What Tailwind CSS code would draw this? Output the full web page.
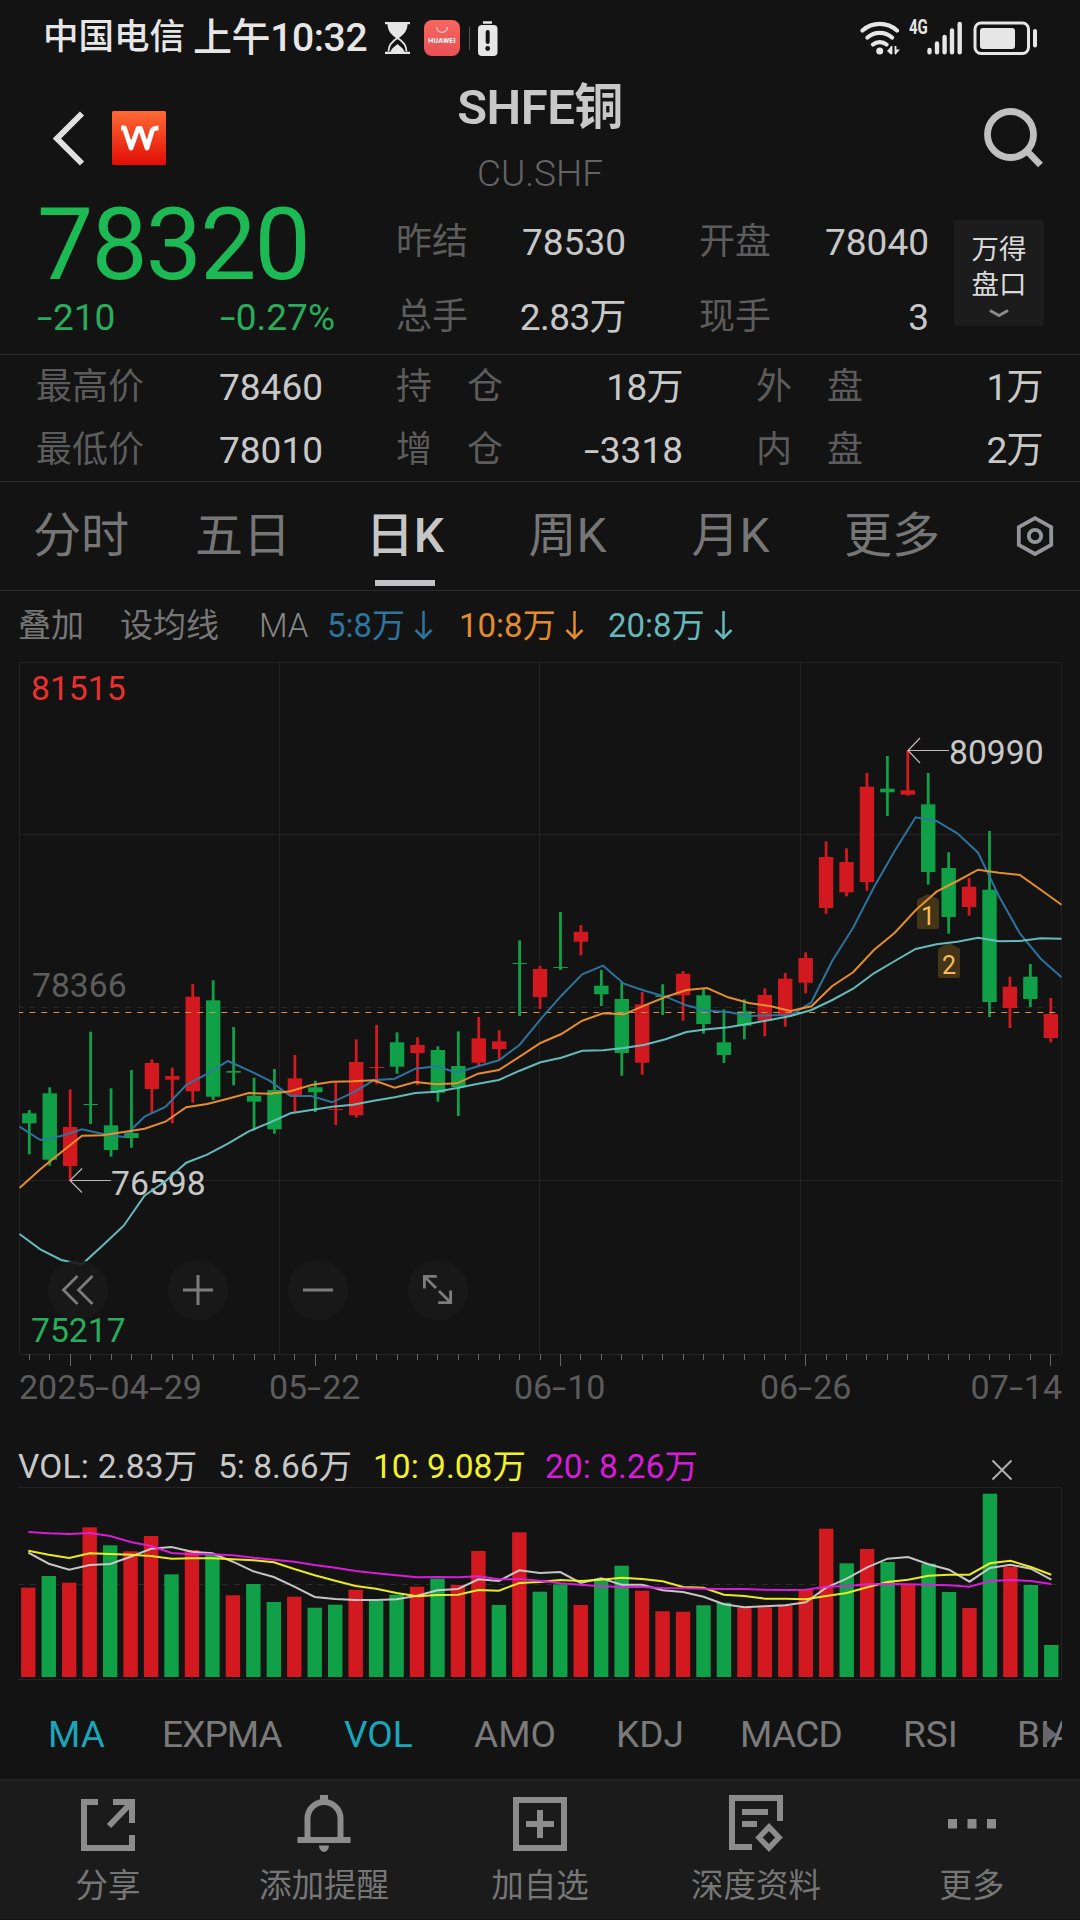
<!DOCTYPE html>
<html lang="zh-CN">
<head>
    <meta charset="UTF-8">
    <meta name="viewport" content="width=device-width, initial-scale=1.0">
    <title>SHFE铜 CU.SHF</title>
    <script src="https://cdn.jsdelivr.net/npm/@tailwindcss/browser@4"></script>
</head>
<body class="bg-[#131313] font-[Roboto,'Noto_Sans_CJK_SC',sans-serif] text-[#c8c8c8]">
    <div class="w-[1080px] h-[1920px] flex flex-col overflow-hidden">

        <!-- Status bar -->
        <div class="h-[76px] shrink-0 flex items-center justify-between pl-[43px] pr-[42px] text-[#e6e6e6]">
            <div class="flex items-center">
                <span class="w-[150px] text-[35.500px] font-medium leading-none">中国电信</span>
                <span class="w-[192px] text-[39px] font-medium leading-none whitespace-nowrap tracking-[-0.4px]">上午10:32</span>
                <svg class="w-[25px] h-[32px]" viewBox="0 0 25 32" fill="none">
                    <path d="M0 1h25M0 31h25" stroke="#e6e6e6" stroke-width="2.4"/>
                    <path d="M3.500 29.500c0-7 4-10.500 9-13.500c5 3 9 6.500 9 13.500" stroke="#e6e6e6" stroke-width="1.800"/>
                    <path d="M2.500 2h20c0 7-4 11-10 15C6.500 13 2.500 9 2.500 2zM5.500 30c1-4 4-5 7-8c3 3 6 4 7 8z" fill="#e6e6e6"/>
                </svg>
                <div class="ml-[14px] w-[36px] h-[36px] rounded-[8px] bg-linear-to-b from-[#f9665f] to-[#e85055] flex flex-col items-center">
                    <svg class="mt-[7px] w-[12px] h-[7px]" viewBox="0 0 12 7" fill="none" stroke="#ffd9d6" stroke-width="1.200"><path d="M.6 0a5.400 5.400 0 0 0 10.800 0"/></svg>
                    <span class="mt-[4px] text-[7px] leading-none font-bold tracking-[0.2px] text-white">HUAWEI</span>
                </div>
                <div class="ml-[9px] w-px h-[23px] bg-[#555]"></div>
                <svg class="ml-[8px] w-[20px] h-[35px]" viewBox="0 0 20 35">
                    <path d="M5 1.500h9" stroke="#e6e6e6" stroke-width="2.500"/>
                    <rect y="4" width="19.500" height="31" rx="4" fill="#e6e6e6"/>
                    <path d="M9.700 11v10" stroke="#131313" stroke-width="4" stroke-linecap="round"/>
                    <circle cx="9.700" cy="27.500" r="2.400" fill="#131313"/>
                </svg>
            </div>
            <div class="flex items-center">
                <svg class="w-[41px] h-[34px]" viewBox="0 0 41 34" fill="none" stroke="#e6e6e6" stroke-width="4.200" stroke-linecap="round">
                    <path d="M2.500 9.500a26 26 0 0 1 34.500 0M7.500 16.500a18.500 18.500 0 0 1 24.500 0M13 23.500a10.500 10.500 0 0 1 13.500 0"/>
                    <circle cx="19.700" cy="30" r="3.500" fill="#e6e6e6" stroke="none"/>
                    <path d="M27 30l4.500-5v9zM27 29h4M35 34v-9M35 34l5-5.500h-5z" fill="#e6e6e6" stroke="none"/>
                    <path d="M31.500 25v8M35.500 25v8" stroke-width="1.800" stroke-linecap="butt"/>
                </svg>
                <span class="ml-[8px] -mt-[22px] w-[17px] text-[20px] leading-none font-bold scale-x-75 origin-left">4G</span>
                <svg class="w-[36px] h-[34px]" viewBox="0 0 36 34" stroke="#e6e6e6" stroke-width="4.400" stroke-linecap="round">
                    <path d="M3.500 29v2.300M11 22.500v8.800M18.600 16v15.300M26 9.500v21.800M33.700 3v28.300"/>
                </svg>
                <svg class="ml-[11px] w-[65px] h-[34px]" viewBox="0 0 65 34">
                    <rect x="2" y="2" width="53.500" height="30.500" rx="6" fill="none" stroke="#e6e6e6" stroke-width="3"/>
                    <rect x="7" y="7" width="35" height="21" rx="3" fill="#e6e6e6"/>
                    <rect x="60" y="8" width="4" height="18.500" rx="2" fill="#e6e6e6"/>
                </svg>
            </div>
        </div>

        <!-- Header -->
        <div class="h-[132px] shrink-0 flex justify-between pl-[50px] pr-[36px]">
            <div class="w-[160px] flex pt-[35px]">
                <svg class="w-[36px] h-[56px]" viewBox="0 0 36 56" fill="none" stroke="#e0e0e0" stroke-width="6"><path d="M32 2.500L7 27.500L32 52.500"/></svg>
                <svg class="ml-[26px] w-[54px] h-[54px]" viewBox="0 0 54 54">
                    <defs>
                        <linearGradient id="logo" x1="0" y1="0" x2="0" y2="1">
                            <stop offset="0" stop-color="#ff6a35"/>
                            <stop offset="1" stop-color="#e20d05"/>
                        </linearGradient>
                    </defs>
                    <rect width="54" height="54" rx="1.500" fill="url(#logo)"/>
                    <path d="M9 17h3.500l6.500 20L26 17.500h2.500L35 37L40 20q1-3 6.500-3.200" fill="none" stroke="#fff" stroke-width="4.800" stroke-linejoin="round"/>
                </svg>
            </div>
            <div class="flex flex-col items-center pt-[1px]">
                <h1 class="h-[62px] text-[49px] leading-[62px] font-semibold tracking-[-0.5px]">SHFE铜</h1>
                <p class="text-[37px] leading-[69px] font-light text-[#646464]">CU.SHF</p>
            </div>
            <div class="w-[174px] flex justify-end pt-[31px]">
                <svg class="w-[62px] h-[62px]" viewBox="0 0 62 62" fill="none" stroke="#c0c0c0" stroke-width="6.800">
                    <circle cx="28.500" cy="27.500" r="23"/>
                    <path d="M45 44l13.500 14"/>
                </svg>
            </div>
        </div>

        <!-- Quote -->
        <div class="h-[146px] shrink-0 flex pl-[37px] pr-[36px] text-[37px]">
            <div class="w-[359px] text-[#1cb955]">
                <div class="text-[100px] leading-[73px] tracking-[-1.800px]">78320</div>
                <div class="w-[298px] flex justify-between leading-[74px] text-[#27ae5c]">
                    <span><i class="not-italic inline-block w-[16px] origin-left scale-x-150">-</i>210</span>
                    <span><i class="not-italic inline-block w-[16px] origin-left scale-x-150">-</i>0.27%</span>
                </div>
            </div>
            <div class="-mt-[3px] w-[230px] leading-[75px]">
                <div class="flex justify-between"><span class="text-[36px] text-[#5c5c5c]">昨结</span><span>78530</span></div>
                <div class="flex justify-between"><span class="text-[36px] text-[#5c5c5c]">总手</span><span class="tracking-[-0.6px]">2.83万</span></div>
            </div>
            <div class="-mt-[3px] ml-[73px] w-[230px] leading-[75px]">
                <div class="flex justify-between"><span class="text-[36px] text-[#5c5c5c]">开盘</span><span>78040</span></div>
                <div class="flex justify-between"><span class="text-[36px] text-[#5c5c5c]">现手</span><span>3</span></div>
            </div>
            <div class="mt-[12px] ml-[25px] w-[90px] h-[106px] rounded-[2px] bg-[#1c1c1c] flex flex-col items-center pt-[13px] text-[27.500px] leading-[34.500px] text-[#dadada]">
                <span>万得</span>
                <span>盘口</span>
                <svg class="mt-[7px] w-[20px] h-[9px]" viewBox="0 0 20 9" fill="none" stroke="#8a8a8a" stroke-width="3"><path d="M1 1.500L10 6.500L19 1.500"/></svg>
            </div>
        </div>

        <div class="h-[127px] shrink-0 border-t border-[#2c2c2c] pl-[36px] pr-[37px] pt-[1px] text-[37px] leading-[63px]">
            <div class="flex justify-between">
                <div class="w-[287px] flex justify-between"><span class="text-[36px] text-[#5c5c5c]">最高价</span><span>78460</span></div>
                <div class="w-[287px] flex justify-between"><span class="w-[107px] flex justify-between text-[36px] text-[#5c5c5c]"><i class="not-italic">持</i><i class="not-italic">仓</i></span><span class="tracking-[-0.6px]">18万</span></div>
                <div class="w-[287px] flex justify-between"><span class="w-[107px] flex justify-between text-[36px] text-[#5c5c5c]"><i class="not-italic">外</i><i class="not-italic">盘</i></span><span class="tracking-[-0.6px]">1万</span></div>
            </div>
            <div class="flex justify-between">
                <div class="w-[287px] flex justify-between"><span class="text-[36px] text-[#5c5c5c]">最低价</span><span>78010</span></div>
                <div class="w-[287px] flex justify-between"><span class="w-[107px] flex justify-between text-[36px] text-[#5c5c5c]"><i class="not-italic">增</i><i class="not-italic">仓</i></span><span><i class="not-italic inline-block w-[16px] origin-left scale-x-150">-</i>3318</span></div>
                <div class="w-[287px] flex justify-between"><span class="w-[107px] flex justify-between text-[36px] text-[#5c5c5c]"><i class="not-italic">内</i><i class="not-italic">盘</i></span><span class="tracking-[-0.6px]">2万</span></div>
            </div>
        </div>

        <!-- Period tabs -->
        <div class="h-[110px] shrink-0 border-y border-[#2c2c2c] flex items-center text-[48px] leading-[108px] text-[#767676]">
            <div class="w-[162px] text-center">分时</div>
            <div class="w-[162px] text-center">五日</div>
            <div class="relative w-[162px] text-center font-medium text-[#c6c6c6]">日K
                <div class="absolute bottom-[4px] left-[51px] w-[60px] h-[6px] bg-[#c2c1c4]"></div>
            </div>
            <div class="w-[163px] text-center">周K</div>
            <div class="w-[163px] text-center">月K</div>
            <div class="w-[160px] text-center">更多</div>
            <svg class="ml-[44px] w-[38px] h-[42px]" viewBox="0 0 38 42" fill="none" stroke="#94949b" stroke-width="3.800">
                <path d="M19 3.200L35.200 12.200V30L19 39L2.800 30V12.200z"/>
                <circle cx="19" cy="21" r="6.200"/>
            </svg>
        </div>

        <!-- MA legend -->
        <div class="h-[71px] shrink-0 flex pl-[18px] text-[33px] leading-[69px] text-[#767676] whitespace-nowrap">
            <span class="w-[102px]">叠加</span>
            <span class="w-[139px]">设均线</span>
            <span class="w-[68px] font-light text-[#868686]">MA</span>
            <span class="w-[87px] text-[#2d749f]">5:8万</span>
            <svg class="mt-[20px] w-[19px] h-[30px]" viewBox="0 0 19 30" fill="none" stroke="#2d749f" stroke-width="2.500"><path d="M9.500 0v27M1.500 19l8 8l8-8"/></svg>
            <span class="ml-[26px] w-[106px] text-[#e38c2e]">10:8万</span>
            <svg class="mt-[20px] w-[19px] h-[30px]" viewBox="0 0 19 30" fill="none" stroke="#e38c2e" stroke-width="2.500"><path d="M9.500 0v27M1.500 19l8 8l8-8"/></svg>
            <span class="ml-[24px] w-[106px] text-[#65b9bb]">20:8万</span>
            <svg class="mt-[20px] w-[19px] h-[30px]" viewBox="0 0 19 30" fill="none" stroke="#65b9bb" stroke-width="2.500"><path d="M9.500 0v27M1.500 19l8 8l8-8"/></svg>
        </div>

        <!-- K line chart -->
        <div class="relative h-[705px] shrink-0">
            <svg id="kline" class="w-[1080px] h-[705px]" viewBox="0 0 1080 705" fill="none">
                <path d="M19.500 .5H1061.500V692.500H19.500zM279.500 0V692M539.500 0V692M800.500 0V692M19 172.500H1061M19 518.500H1061" stroke="#232323"/>
                <path d="M19 345.500H1061" stroke="#2a2a2a" stroke-dasharray="6 6" stroke-dashoffset="1.700"/>
                <text x="31" y="38" font-size="33.700" fill="#e9302f">81515</text>
                <text x="32" y="335" font-size="33.700" fill="#5c5c5c">78366</text>
                <g id="candles"></g>
                <path d="M19 350.500H1061" stroke="#dc8f4a" stroke-width="1.200" stroke-dasharray="6 6" stroke-dashoffset="1.700"/>
                <text x="111" y="533" font-size="33.700" fill="#c8c8c8">76598</text>
                <text x="949" y="102" font-size="33.700" fill="#c8c8c8">80990</text>
                <path d="M70 518.500H111M82 506.500L70 518.500L82 530.500M908 88.500H949M920 76L908 88.500L920 101" stroke="#c0b8b8" stroke-width="1.200"/>
                <g id="maLines"></g>
                <g fill="#f6bf55" font-size="25">
                    <path d="M917 239q0-2 2-2.500l7-3.500q2-1 4 0l7 3.500q2 .5 2 2.500v26q0 2-2 2h-18q-2 0-2-2z" fill="#d89a2b" fill-opacity=".25"/>
                    <text x="921" y="262.500">1</text>
                    <path d="M938 288q0-2 2-2.500l7-3.500q2-1 4 0l7 3.500q2 .5 2 2.500v26q0 2-2 2h-18q-2 0-2-2z" fill="#d89a2b" fill-opacity=".25"/>
                    <text x="942" y="311.500">2</text>
                </g>
                <g id="ticks" stroke="#666"></g>
            </svg>
            <div class="absolute left-[48px] top-[598px] flex gap-[60px]">
                <div class="w-[60px] h-[60px] rounded-full bg-[#1a1a1a]/90">
                    <svg viewBox="0 0 60 60" fill="none" stroke="#7c7c7c" stroke-width="2.800"><path d="M29.500 16L15.500 30L29.500 44M44.500 16L30.500 30L44.500 44"/></svg>
                </div>
                <div class="w-[60px] h-[60px] rounded-full bg-[#1a1a1a]/90">
                    <svg viewBox="0 0 60 60" fill="none" stroke="#7c7c7c" stroke-width="3"><path d="M15 30H45M30 15V45"/></svg>
                </div>
                <div class="w-[60px] h-[60px] rounded-full bg-[#1a1a1a]/90">
                    <svg viewBox="0 0 60 60" fill="none" stroke="#7c7c7c" stroke-width="3"><path d="M15 30H45"/></svg>
                </div>
                <div class="w-[60px] h-[60px] rounded-full bg-[#1a1a1a]/90">
                    <svg viewBox="0 0 60 60" fill="none" stroke="#7c7c7c" stroke-width="2.800"><path d="M16.400 28.500V16.400H28.800M16.400 16.400L28 28M42.600 30.500V42.600H30.200M42.600 42.600L31 31"/></svg>
                </div>
            </div>
            <div class="absolute left-[31px] top-[649px] text-[33.700px] leading-[40px] text-[#27ae5c]">75217</div>
        </div>

        <!-- Dates -->
        <div class="relative h-[40px] shrink-0 text-[34px] leading-[40px] text-[#5c5c5c]">
            <span class="absolute left-[19px]">2025<i class="not-italic inline-block w-[15px] origin-left scale-x-150">-</i>04<i class="not-italic inline-block w-[15px] origin-left scale-x-150">-</i>29</span>
            <span class="absolute left-[269px]">05<i class="not-italic inline-block w-[15px] origin-left scale-x-150">-</i>22</span>
            <span class="absolute left-[514px]">06<i class="not-italic inline-block w-[15px] origin-left scale-x-150">-</i>10</span>
            <span class="absolute left-[760px]">06<i class="not-italic inline-block w-[15px] origin-left scale-x-150">-</i>26</span>
            <span class="absolute right-[18px]">07<i class="not-italic inline-block w-[15px] origin-left scale-x-150">-</i>14</span>
        </div>

        <!-- Volume -->
        <div class="h-[80px] shrink-0 flex items-end pl-[18px] text-[33.500px] leading-[41px] whitespace-nowrap">
            <span class="w-[200px] tracking-[0.200px]">VOL: 2.83万</span>
            <span class="w-[155px]">5: 8.66万</span>
            <span class="w-[172px] text-[#f2f22a]">10: 9.08万</span>
            <span class="w-[446px] text-[#d81bd8]">20: 8.26万</span>
            <svg class="mb-[6px] w-[22px] h-[22px]" viewBox="0 0 22 22" stroke="#b0b0b0" stroke-width="2"><path d="M1.500 1.500L20.500 20.500M20.500 1.500L1.500 20.500"/></svg>
        </div>
        <svg class="w-[1080px] h-[193px] shrink-0" viewBox="0 0 1080 193" fill="none">
            <path d="M18 .5H1061.500V192.500H18" stroke="#242424"/>
            <path d="M18 97.500H1061" stroke="#2a2a2a" stroke-dasharray="6 6"/>
            <g id="volBars"></g>
            <g id="volLines"></g>
        </svg>

        <!-- Indicator tabs -->
        <div class="relative w-[1062px] h-[99px] shrink-0 overflow-hidden whitespace-nowrap pt-[10px] pl-[48px] flex text-[37px] leading-[90px] text-[#7a7a7a]">
            <span class="shrink-0 w-[114px] text-[#1ba5bb]">MA</span>
            <span class="shrink-0 w-[182px] tracking-[-0.9px]">EXPMA</span>
            <span class="shrink-0 w-[130px] text-[#1ba5bb]">VOL</span>
            <span class="shrink-0 w-[142px]">AMO</span>
            <span class="shrink-0 w-[124px]">KDJ</span>
            <span class="shrink-0 w-[163px] tracking-[-0.7px]">MACD</span>
            <span class="shrink-0 w-[114px]">RSI</span>
            <span class="shrink-0">BIAS</span>
            <svg class="absolute left-[1043px] top-[43px] w-[14px] h-[23px]" viewBox="0 0 14 23"><path d="M0 0L14 11.500L0 23z" fill="#66666c"/></svg>
        </div>

        <!-- Bottom bar -->
        <div class="h-[140px] shrink-0 grid grid-cols-5 border-t-2 border-[#222] bg-[#1b1b1b] text-[32.500px] text-[#767676]">
            <div class="flex flex-col items-center pt-[12px]">
                <svg class="w-[60px] h-[60px]" viewBox="0 0 60 60" fill="none" stroke="#8c8c8c" stroke-width="6"><path d="M20 9H6V55H54V42M35 9H54V30M54 9L31 33"/></svg>
                <span class="leading-[66px]">分享</span>
            </div>
            <div class="flex flex-col items-center pt-[12px]">
                <svg class="w-[60px] h-[60px]" viewBox="0 0 60 60" fill="none" stroke="#8c8c8c" stroke-width="6">
                    <path d="M13.500 46V25.500a16.500 16.500 0 0 1 33 0V46M3.500 47H56.500"/>
                    <path d="M30 2v7" stroke-width="8"/>
                    <path d="M25 52.500h10a5 6.500 0 0 1-10 0z" fill="#8c8c8c" stroke="none"/>
                </svg>
                <span class="leading-[66px]">添加提醒</span>
            </div>
            <div class="flex flex-col items-center pt-[12px]">
                <svg class="w-[60px] h-[60px]" viewBox="0 0 60 60" fill="none" stroke="#8c8c8c" stroke-width="6"><path d="M6 7H54V55H6zM30 17V45M16 31H44"/></svg>
                <span class="leading-[66px]">加自选</span>
            </div>
            <div class="flex flex-col items-center pt-[12px]">
                <svg class="w-[60px] h-[60px]" viewBox="0 0 60 60" fill="none" stroke="#8c8c8c" stroke-width="6">
                    <path d="M26 54H6V5H54V28M16 19H42M16 31H31"/>
                    <path d="M43 34L53 44.500L43 55L33 44.500z" stroke-width="5.500"/>
                </svg>
                <span class="leading-[66px]">深度资料</span>
            </div>
            <div class="flex flex-col items-center pt-[12px]">
                <svg class="w-[60px] h-[60px]" viewBox="0 0 60 60" fill="#8c8c8c"><path d="M6 26h9v9.500H6zM25.500 26h9v9.500h-9zM45 26h9v9.500h-9z"/></svg>
                <span class="leading-[66px]">更多</span>
            </div>
        </div>
    </div>

    <script>
        const RED = '#d2191f';
        const GREEN = '#0fa048';

        // [direction, high, body top, body bottom, low]
        const candles = [
            ['g', 448, 451.3, 461.3, 492.3], ['g', 425.3, 431.3, 497.7, 503.7], ['r', 427.3, 465, 504, 518.7],
            ['g', 369.7, 442, 442.7, 462], ['g', 426.3, 463.3, 488, 494.7], ['g', 408, 471, 476, 485.7],
            ['r', 397.3, 401, 427, 451.3], ['r', 405.7, 414, 417.7, 461.3], ['r', 322, 334.7, 429.3, 440.7],
            ['g', 318.3, 338.3, 434.7, 438], ['g', 365, 409, 410.7, 423.3], ['g', 415.7, 433.7, 439.7, 468.3],
            ['g', 407, 428, 467.3, 471.7], ['r', 393, 416.3, 433, 450], ['g', 418.7, 425.3, 430.3, 450],
            ['r', 420.3, 447, 448, 463], ['r', 377.3, 400, 453.3, 455.7], ['r', 363, 405, 406, 422.3],
            ['g', 370.3, 380.3, 404.7, 411.7], ['r', 375.3, 383, 391, 423], ['g', 384.3, 388, 430.7, 439.7],
            ['g', 369.3, 404, 425.3, 454], ['r', 355, 376.3, 400.7, 403.7], ['r', 368.3, 379.3, 387, 397],
            ['g', 278.3, 301, 301.7, 354], ['r', 304, 307, 335, 347], ['g', 250, 305, 306, 308],
            ['r', 263, 269.7, 279.7, 293.3], ['g', 308, 323.7, 332.3, 344], ['g', 320, 337, 391, 413.7],
            ['r', 330, 342.3, 400.7, 412.7], ['g', 322.3, 333.3, 335, 353], ['r', 309, 311.7, 333.3, 358.7],
            ['g', 326.7, 333.3, 362, 371.7], ['g', 347.3, 380.3, 393, 401], ['g', 337.3, 349.3, 363.7, 377.3],
            ['r', 326.3, 333, 358.7, 374.3], ['r', 311, 316.7, 352.7, 364.7], ['r', 290.3, 296, 320.7, 331.3],
            ['r', 179.3, 195, 246, 251.7], ['r', 186.3, 200, 230.3, 234.3], ['r', 111, 124.7, 220, 228.7],
            ['g', 94, 126.7, 130.3, 154], ['r', 88.3, 128.3, 132.7, 133.7], ['g', 111, 142.3, 210, 222.7],
            ['g', 190.3, 206, 255, 271.7], ['r', 216, 224.7, 245, 253.7], ['g', 169, 227.7, 340, 355],
            ['r', 314.7, 324.7, 346, 366], ['g', 302, 314.7, 337, 345], ['r', 336, 352, 376, 380.3]
        ];

        const ma = {
            '#2e77a3': [464.7, 478, 474, 467.3, 472, 475, 454.7, 445, 423, 412, 399, 408.3, 418.7, 434, 434, 440.3, 430.7, 418.3, 416.7, 406.7, 404.3, 410.7, 404.3, 398.3, 382.7, 357.3, 333.7, 312.3, 303.7, 321.7, 328.7, 334.7, 343.3, 348.7, 350, 354, 353.3, 353.3, 340.3, 298.7, 265.7, 225.3, 188.7, 155.3, 159, 171.3, 190.7, 234.3, 271.3, 296.7, 315.3],
            '#f0932f': [526, 507.3, 490.3, 473.7, 473.3, 470, 466.7, 459.7, 445.3, 442, 436.7, 431, 431.7, 429.3, 423, 419.7, 419.3, 418.3, 425.7, 420, 422.3, 421.3, 411.7, 408, 394.7, 381, 372, 358.7, 351.3, 352.3, 343.3, 335, 328, 326, 335.3, 341, 344, 349, 344.3, 324, 310.3, 288, 270.7, 248.3, 229.7, 219, 207.7, 210.7, 213, 227.7, 242.7],
            '#6cc3c5': [572, 587.3, 598, 602.3, 583.3, 563.7, 533.7, 519.3, 500.7, 492.7, 481.7, 469.3, 460.7, 451.3, 448, 444.7, 442.7, 438.7, 435.3, 431, 429.7, 426, 421.7, 418, 408.7, 400.3, 395.7, 388.7, 388.3, 386, 382.7, 377.3, 370, 367.3, 365.3, 361.7, 358, 354, 348, 338, 326.7, 311.3, 299, 287, 282.3, 279.7, 275.7, 279.3, 279, 276.3, 276.7]
        };

        const volumes = [
            'r89.3', 'g101', 'r94.3', 'r149.7', 'g131.7', 'r125.7', 'r141', 'g102.7', 'r127', 'g122.3', 'r81.7', 'g93', 'g75',
            'r80.3', 'g69.3', 'g72.3', 'r87.3', 'g76', 'g82.3', 'r90.3', 'g98.3', 'r92', 'r126', 'g72', 'r144.7', 'g85.3',
            'g92.7', 'r72', 'g96.3', 'g111.3', 'r86.3', 'r65.7', 'r65.3', 'g71.7', 'g74.3', 'r69.3', 'r69.7', 'r71.3', 'r87',
            'r148.3', 'g113.7', 'r128', 'g115', 'r92', 'g113.3', 'g85', 'r69', 'g183.3', 'r110.3', 'g92', 'g32'
        ];

        const volMa = {
            '#cfcfcf': [65.7, 76.7, 82.7, 78, 77, 69.7, 61.7, 60, 64.7, 66.3, 74.7, 84.3, 90, 99.7, 110, 112, 113, 113, 112.3, 108.7, 103.3, 102, 92.3, 94, 83.3, 86, 85, 96, 91.3, 97.7, 97.7, 103.3, 105, 109.7, 117.3, 120.3, 119.3, 118.3, 115.3, 100.7, 91.7, 80.3, 71.7, 70, 77.3, 82.7, 94.7, 81, 77.7, 81.7, 92.7],
            '#f5f522': [63.7, 67.7, 71, 66.3, 67, 67.7, 69, 71.7, 71.3, 71.3, 72.3, 73.3, 75.3, 82, 88.3, 93.7, 99, 101.7, 106, 109.3, 108, 107.7, 103, 103.7, 96, 95, 93, 94, 92.7, 90.7, 92, 94.3, 100, 100.7, 107.7, 109, 111.7, 111.7, 112.3, 109, 106, 100.3, 95, 92.7, 88.7, 87.7, 87.7, 76.3, 73.7, 80, 87.7],
            '#e01ce0': [45, 46.3, 47, 46, 49, 55, 59, 66, 67.3, 67.3, 68.3, 70.7, 72.7, 74.7, 78, 80.7, 84, 86.3, 88.3, 90.3, 90, 90.3, 89.3, 92.3, 92, 93.7, 96.3, 97.7, 99.3, 100, 100, 101, 101.3, 101.7, 102, 102, 102.7, 103, 102.7, 99.7, 99, 97.3, 97, 97.3, 97.7, 98.3, 99.7, 94, 93, 94, 97]
        };

        function drawLines(id, series, x0, step) {
            let html = '';
            for (const color in series) {
                const points = series[color].map((y, i) => (x0 + i * step).toFixed(1) + ',' + y).join(' ');
                html += `<polyline points="${points}" stroke="${color}" stroke-width="2" stroke-opacity="0.95"/>`;
            }
            document.getElementById(id).innerHTML = html;
        }

        // Candles and axis ticks
        let candleHtml = '';
        let tickHtml = '';
        candles.forEach(([dir, high, top, bottom, low], i) => {
            const x = 29.3 + i * 20.43;
            const color = dir === 'r' ? RED : GREEN;
            candleHtml += `<rect x="${x - 1.4}" y="${high}" width="2.8" height="${low - high}" fill="${color}"/>`;
            candleHtml += `<rect x="${x - 7.2}" y="${top}" width="14.4" height="${Math.max(bottom - top, 1)}" fill="${color}"/>`;
            const tx = Math.floor(x) + 0.5;
            tickHtml += `<path d="M${tx} 692V${i % 12 === 2 ? 704 : 698}"/>`;
        });
        document.getElementById('candles').innerHTML = candleHtml;
        document.getElementById('ticks').innerHTML = tickHtml;
        drawLines('maLines', ma, 19.5, 20.84);

        // Volume bars
        document.getElementById('volBars').innerHTML = volumes.map((v, i) => {
            const h = parseFloat(v.slice(1));
            return `<rect x="${28.3 + i * 20.46 - 7.2}" y="${190 - h}" width="14.4" height="${h}" fill="${v[0] === 'r' ? RED : GREEN}"/>`;
        }).join('');
        drawLines('volLines', volMa, 28.3, 20.46);
    </script>
</body>
</html>
